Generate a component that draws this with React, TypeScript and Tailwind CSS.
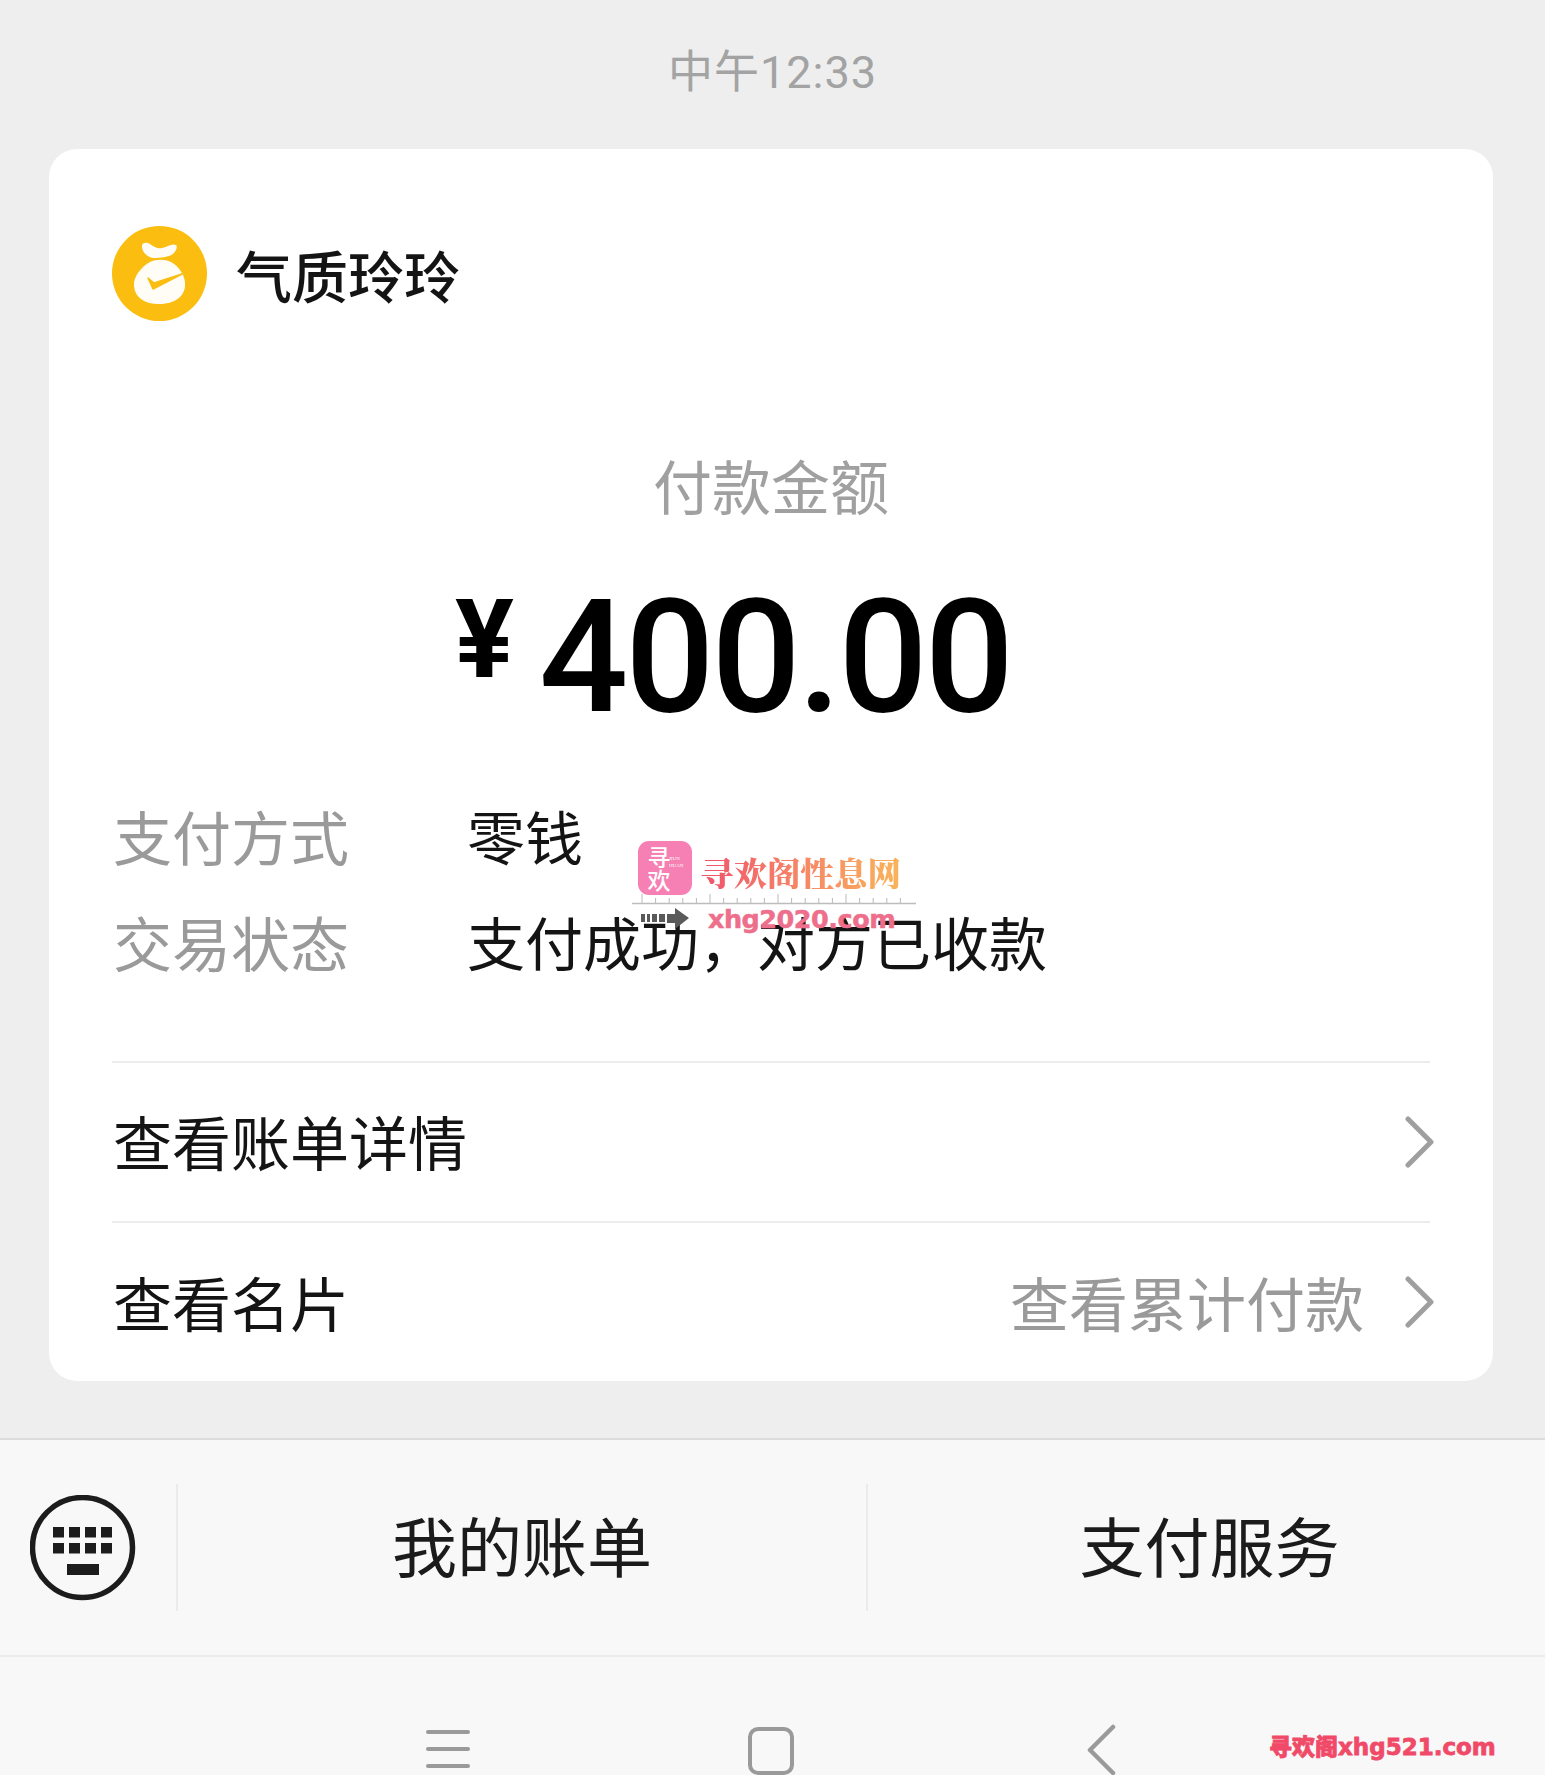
import React from "react";

const cjk = "font-['Noto_Sans_CJK_SC','Noto_Sans',sans-serif]";

function Chevron() {
  return (
    <svg width="30" height="52" viewBox="0 0 30 52" fill="none" className="shrink-0">
      <path d="M3 3 L26 26 L3 49" stroke="#9f9f9f" strokeWidth="5" strokeLinecap="round" strokeLinejoin="round" />
    </svg>
  );
}

function Keyboard() {
  const xs = [53, 69, 85, 101];
  return (
    <svg width="106" height="106" viewBox="30 75 106 106" fill="none">
      <circle cx="82.5" cy="127.5" r="50" stroke="#1c1c1c" strokeWidth="5.5" />
      {xs.map((x) => (
        <rect key={`a${x}`} x={x} y="107" width="11" height="10.5" fill="#1c1c1c" />
      ))}
      {xs.map((x) => (
        <rect key={`b${x}`} x={x} y="123" width="11" height="10.5" fill="#1c1c1c" />
      ))}
      <rect x="67" y="144" width="32" height="11" fill="#1c1c1c" />
    </svg>
  );
}

function Avatar() {
  return (
    <svg width="95" height="95" viewBox="0 0 95 95" className="shrink-0">
      <circle cx="47.5" cy="47.5" r="47.5" fill="#fabd10" />
      <path d="M30 20 C30 16 35 16 38 18 C42 21 46 23 50 22 C55 21 60 17 64 19 C66 21 64 25 61 28 C57 31 48 32 41 32 C35 31 30 26 30 20 Z" fill="#fffdf5" />
      <path d="M38 36 C44 33 53 33 59 36 C68 41 74 51 73 60 C72 72 61 78 47 78 C33 78 23 72 22 60 C21 51 29 41 38 36 Z" fill="#fffdf5" />
      <path d="M36 52 L41 63 L70 48 L42 57 Z" fill="#fabd10" stroke="#fabd10" strokeWidth="1.5" strokeLinejoin="round" />
    </svg>
  );
}

function Row({ label, value }: { label: string; value: string }) {
  return (
    <div className="flex h-[106px] items-center pl-[64px]">
      <span className="w-[354px] text-[59px] leading-none text-[#9a9a9a]">{label}</span>
      <span className="text-[58px] leading-none text-[#141414]">{value}</span>
    </div>
  );
}

function Ticks() {
  const xs = Array.from({ length: 20 }, (_, i) => 10 + i * 13.6);
  return (
    <svg width="284" height="12" viewBox="0 0 284 12">
      {xs.map((x, i) => (
        <line key={x} x1={x} x2={x} y1={i % 5 === 0 ? 1 : 5} y2="10" stroke="#b9b9b9" strokeWidth="1" />
      ))}
      <line x1="0" x2="284" y1="10.5" y2="10.5" stroke="#bdbdbd" strokeWidth="1.5" />
    </svg>
  );
}

export default function App() {
  return (
    <div className={`${cjk} relative h-[1775px] w-[1545px] overflow-hidden bg-[#eeeeee]`}>
      <div className="flex h-[149px] items-start justify-center pt-[44px]">
        <span className="font-['Roboto','Noto_Sans_CJK_SC',sans-serif] text-[45px] leading-[58px] tracking-[1px] text-[#a3a3a3]">中午12:33</span>
      </div>

      <div className="ml-[49px] mr-[52px] h-[1232px] rounded-[28px] bg-white">
        <div className="flex items-center pl-[63px] pt-[77px]">
          <Avatar />
          <span className="ml-[29px] text-[56px] font-medium leading-none text-[#141414]">气质玲玲</span>
        </div>

        <div className="mt-[129px] text-center text-[59px] leading-[70px] text-[#a0a0a0]">付款金额</div>

        <div className="mt-[67px] flex h-[140px] items-center justify-center pr-[76px] font-['Roboto',sans-serif] text-black">
          <span className="mb-[34px] mr-[25px] text-[110px] font-bold leading-none">¥</span>
          <span className="text-[157px] font-medium leading-none tracking-[-3px]">400.00</span>
        </div>

        <div className="mt-[55px]">
          <Row label="支付方式" value="零钱" />
          <Row label="交易状态" value="支付成功，对方已收款" />
        </div>

        <div className="ml-[63px] mr-[63px] mt-[67px] border-t-2 border-[#ececec]" />
        <div className="flex h-[158px] items-center justify-between pl-[64px] pr-[58px]">
          <span className="pb-[3px] text-[59px] leading-none text-[#141414]">查看账单详情</span>
          <Chevron />
        </div>
        <div className="ml-[63px] mr-[63px] border-t-2 border-[#ececec]" />
        <div className="flex h-[158px] items-center pl-[64px] pr-[58px]">
          <span className="pb-[2px] text-[59px] leading-none text-[#141414]">查看名片</span>
          <span className="ml-auto mr-[41px] pb-[2px] text-[59px] leading-none text-[#9a9a9a]">查看累计付款</span>
          <Chevron />
        </div>
      </div>

      <div className="mt-[57px] flex h-[219px] items-center border-y-2 border-t-[#dcdcdc] border-b-[#ebebeb] bg-[#f8f8f8]">
        <div className="flex w-[176px] shrink-0 justify-center pr-[11px]">
          <Keyboard />
        </div>
        <div className="h-[127px] w-[2px] shrink-0 bg-[#ebebeb]" />
        <div className="flex h-full w-[688px] items-center justify-center pb-[7px] text-[65px] leading-none text-[#1b1b1b]">我的账单</div>
        <div className="h-[127px] w-[2px] shrink-0 bg-[#ebebeb]" />
        <div className="flex h-full flex-1 items-center justify-center pb-[7px] pl-[6px] text-[65px] leading-none text-[#1b1b1b]">支付服务</div>
      </div>

      <div className="flex h-[118px] items-start bg-[#f8f8f8] pt-[73px]">
        <div className="ml-[426px] flex w-[44px] flex-col gap-[13px]">
          <div className="h-[4px] rounded-full bg-[#9a9a9a]" />
          <div className="h-[4px] rounded-full bg-[#9a9a9a]" />
          <div className="h-[4px] rounded-full bg-[#9a9a9a]" />
        </div>
        <div className="ml-[278px] -mt-[3px] h-[48px] w-[46px] rounded-[10px] border-[4px] border-[#9a9a9a]" />
        <svg width="30" height="52" viewBox="0 0 30 52" fill="none" className="ml-[292px] -mt-[6px] shrink-0">
          <path d="M27 3 L4 26 L27 49" stroke="#9a9a9a" strokeWidth="4.5" strokeLinecap="round" strokeLinejoin="round" />
        </svg>
      </div>

      {/* watermark over the content */}
      <div className="absolute left-[632px] top-[841px] w-[284px]">
        <div className="flex items-center">
          <div className="relative ml-[6px] flex h-[54px] w-[54px] items-center justify-center rounded-[11px] bg-[#f67fb4]">
            <span className="absolute left-[8px] top-[4px] w-[26px] text-center text-[23px] font-medium leading-[23px] text-white">寻<br />欢</span>
            <span className="absolute left-[31px] top-[14px] font-['Liberation_Serif',serif] text-[5px] leading-[7px] text-white">XUN<br />HUAN</span>
          </div>
          <span className="ml-[8px] mt-[8px] whitespace-nowrap bg-gradient-to-r from-[#ef4f6b] to-[#f9b45a] bg-clip-text font-['Noto_Serif_CJK_SC','Noto_Sans_CJK_SC',serif] text-[33.5px] font-black leading-none text-transparent">寻欢阁性息网</span>
        </div>
        <div className="-mt-[2px]"><Ticks /></div>
        <div className="flex items-center">
          <svg width="52" height="22" viewBox="0 0 52 22" className="ml-[9px]">
            <path d="M0 6h4v8H0zM6 6h3v8H6zM11 6h5v8h-5zM18 6h6v8h-6zM26 6h8V0l14 10-14 11v-6h-8z" fill="#5a5a5a" />
          </svg>
          <span className="ml-[15px] font-['DejaVu_Sans',sans-serif] text-[25.5px] font-bold leading-[28px] tracking-[-0.5px] text-[#ee6f8c] [-webkit-text-stroke:0.5px_#ee6f8c]">xhg2020.com</span>
        </div>
      </div>

      <div className="absolute left-[1269px] top-[1731px] whitespace-nowrap font-['DejaVu_Sans','Noto_Sans_CJK_SC',sans-serif] text-[23px] font-bold leading-[28px] text-[#f04a68] [-webkit-text-stroke:0.8px_#f04a68]">
        <span className="font-['Noto_Sans_CJK_SC',sans-serif] font-black">寻欢阁</span>xhg521.com
      </div>
    </div>
  );
}
